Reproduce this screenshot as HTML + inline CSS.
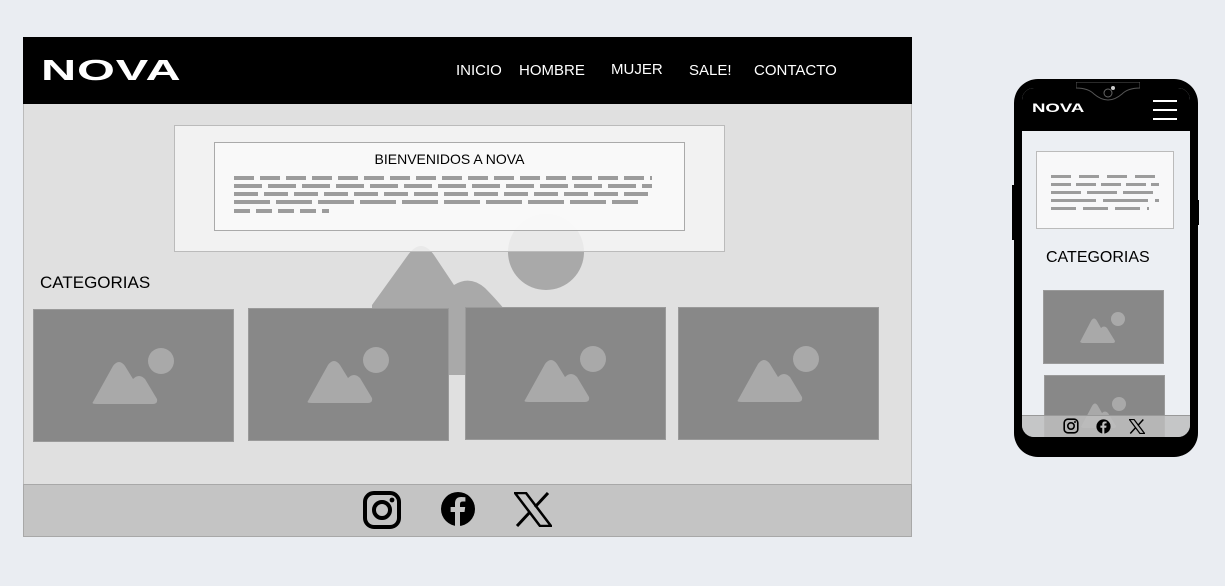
<!DOCTYPE html>
<html><head><meta charset="utf-8"><style>
*{margin:0;padding:0;box-sizing:border-box}
body{width:1225px;height:586px;background:#eaedf2;position:relative;overflow:hidden;font-family:"Liberation Sans",Arial,sans-serif}
.abs{position:absolute}
.nav{color:#fff;font-size:15px;top:62px}
.card{position:absolute;background:#888;border:1px solid #9a9a9a}
</style></head><body>
<!-- desktop -->
<div class="abs" style="left:23px;top:37px;width:889px;height:500px;background:#e0e0e0;border:1px solid #bbb"></div>
<div class="abs" style="left:23px;top:37px;width:889px;height:67px;background:#000"></div>
<div class="abs" style="left:41px;top:54px;color:#fff;font-size:29px;font-weight:bold;letter-spacing:0.5px;transform:scaleX(1.68);transform-origin:left;line-height:34px">NOVA</div>
<div class="abs nav" style="left:456px">INICIO</div>
<div class="abs nav" style="left:519px">HOMBRE</div>
<div class="abs nav" style="left:611px;top:61px">MUJER</div>
<div class="abs nav" style="left:689px">SALE!</div>
<div class="abs nav" style="left:754px">CONTACTO</div>
<svg class="abs" style="left:0;top:0" width="912" height="480">
<path d="M372 305 L408 255 Q421 237 434 255 L454 285 Q470 275 485 288 Q495 298 505 310 L505 375 L372 375 Z" fill="#a9a9a9"/>
<circle cx="546" cy="252" r="38" fill="#a9a9a9"/>
</svg>
<div class="abs" style="left:174px;top:125px;width:551px;height:127px;background:rgba(245,245,245,0.85);border:1px solid #bbb"></div>
<div class="abs" style="left:214px;top:142px;width:471px;height:89px;background:rgba(250,250,250,0.9);border:1px solid #aaa"></div>
<div class="abs" style="left:214px;top:151px;width:471px;text-align:center;font-size:14px">BIENVENIDOS A NOVA</div>
<div class="abs" style="left:234px;top:176px;width:418px;height:4px;background:repeating-linear-gradient(90deg,#9c9c9c 0 20px,transparent 20px 26px)"></div>
<div class="abs" style="left:234px;top:184px;width:418px;height:4px;background:repeating-linear-gradient(90deg,#9c9c9c 0 28px,transparent 28px 34px)"></div>
<div class="abs" style="left:234px;top:192px;width:418px;height:4px;background:repeating-linear-gradient(90deg,#9c9c9c 0 24px,transparent 24px 30px)"></div>
<div class="abs" style="left:234px;top:200px;width:404px;height:4px;background:repeating-linear-gradient(90deg,#9c9c9c 0 36px,transparent 36px 42px)"></div>
<div class="abs" style="left:234px;top:209px;width:95px;height:4px;background:repeating-linear-gradient(90deg,#9c9c9c 0 16px,transparent 16px 22px)"></div>
<div class="abs" style="left:40px;top:273px;font-size:17px">CATEGORIAS</div>
<div class="card" style="left:33px;top:309px;width:201px;height:133px"></div>
<div class="card" style="left:248px;top:308px;width:201px;height:133px"></div>
<div class="card" style="left:465px;top:307px;width:201px;height:133px"></div>
<div class="card" style="left:678px;top:307px;width:201px;height:133px"></div>
<svg class="abs" style="left:0;top:0" width="912" height="480" fill="#a9a9a9">
<g transform="translate(33,309)"><path d="M60 93 L80 57 Q86 49 92 57 L100 70 Q106 64 112 70 L124 90 Q125 95 120 95 L64 95 Q58 95 60 93Z"/><circle cx="128" cy="52" r="13"/></g>
<g transform="translate(248,308)"><path d="M60 93 L80 57 Q86 49 92 57 L100 70 Q106 64 112 70 L124 90 Q125 95 120 95 L64 95 Q58 95 60 93Z"/><circle cx="128" cy="52" r="13"/></g>
<g transform="translate(465,307)"><path d="M60 93 L80 57 Q86 49 92 57 L100 70 Q106 64 112 70 L124 90 Q125 95 120 95 L64 95 Q58 95 60 93Z"/><circle cx="128" cy="52" r="13"/></g>
<g transform="translate(678,307)"><path d="M60 93 L80 57 Q86 49 92 57 L100 70 Q106 64 112 70 L124 90 Q125 95 120 95 L64 95 Q58 95 60 93Z"/><circle cx="128" cy="52" r="13"/></g>
</svg>
<div class="abs" style="left:23px;top:484px;width:889px;height:53px;background:#c4c4c4;border:1px solid #a8a8a8"></div>
<svg class="abs" style="left:362px;top:490px" width="40" height="40" viewBox="0 0 40 40"><rect x="3" y="3" width="34" height="34" rx="9" fill="none" stroke="#000" stroke-width="4"/><circle cx="20" cy="20" r="8" fill="none" stroke="#000" stroke-width="4"/><circle cx="30" cy="10" r="2.4"/></svg>
<svg class="abs" style="left:440px;top:491px" width="36" height="36" viewBox="0 0 36 36"><circle cx="18" cy="18" r="17"/><path d="M20 36 V21 H24.5 L25.2 16 H20 V13 Q20 10.5 22.8 10.5 H25.4 V6.3 Q23.5 6 21.3 6 Q15 6 15 12.4 V16 H10.6 V21 H15 V36Z" fill="#c4c4c4"/></svg>
<svg class="abs" style="left:514px;top:492px" width="38" height="35" viewBox="0 0 38 35"><path d="M1 1 H12 L37 34 H26 Z" fill="none" stroke="#000" stroke-width="2.5"/><path d="M34 1 L21 15 M3 34 L16 20" stroke="#000" stroke-width="3"/></svg>
<!-- phone -->
<div class="abs" style="left:1014px;top:79px;width:184px;height:378px;background:#000;border-radius:24px"></div>
<div class="abs" style="left:1012px;top:185px;width:4px;height:55px;background:#000"></div>
<div class="abs" style="left:1195px;top:200px;width:4px;height:25px;background:#000"></div>
<div class="abs" style="left:1022px;top:88px;width:168px;height:349px;background:#eceff3;border-radius:12px;overflow:hidden">
 <div class="abs" style="left:0;top:0;width:168px;height:43px;background:#000"></div>
 <div class="abs" style="left:10px;top:13px;color:#fff;font-size:12px;font-weight:bold;transform:scaleX(1.55);transform-origin:left">NOVA</div>
 <div class="abs" style="left:131px;top:12px;width:24px;height:2px;background:#fff"></div>
 <div class="abs" style="left:131px;top:21px;width:24px;height:2px;background:#fff"></div>
 <div class="abs" style="left:131px;top:30px;width:24px;height:2px;background:#fff"></div>
 <div class="abs" style="left:14px;top:63px;width:138px;height:78px;background:#f8f8f9;border:1px solid #bbb"></div>
 <div class="abs" style="left:29px;top:87px;width:108px;height:3px;background:repeating-linear-gradient(90deg,#9c9c9c 0 20px,transparent 20px 28px)"></div>
 <div class="abs" style="left:29px;top:95px;width:108px;height:3px;background:repeating-linear-gradient(90deg,#9c9c9c 0 20px,transparent 20px 25px)"></div>
 <div class="abs" style="left:29px;top:103px;width:108px;height:3px;background:repeating-linear-gradient(90deg,#9c9c9c 0 30px,transparent 30px 36px)"></div>
 <div class="abs" style="left:29px;top:111px;width:108px;height:3px;background:repeating-linear-gradient(90deg,#9c9c9c 0 45px,transparent 45px 52px)"></div>
 <div class="abs" style="left:29px;top:119px;width:98px;height:3px;background:repeating-linear-gradient(90deg,#9c9c9c 0 25px,transparent 25px 32px)"></div>
 <div class="abs" style="left:24px;top:161px;font-size:16px">CATEGORIAS</div>
 <div class="card" style="left:21px;top:202px;width:121px;height:74px"></div>
 <div class="card" style="left:22px;top:287px;width:121px;height:74px"></div>
 <svg class="abs" style="left:0;top:0" width="168" height="349" fill="#a9a9a9">
  <path d="M58 254 L69 233 Q72 228 75 233 L79 240 Q82 237 85 240 L93 253 Q93 255 91 255 L60 255Z"/><circle cx="96" cy="231" r="7"/>
  <path d="M59 339 L70 318 Q73 313 76 318 L80 325 Q83 322 86 325 L94 338 Q94 340 92 340 L61 340Z"/><circle cx="97" cy="316" r="7"/>
 </svg>
 <div class="abs" style="left:0;top:327px;width:168px;height:22px;background:rgba(190,190,190,0.85);border-top:1px solid #999"></div>
 <svg class="abs" style="left:41px;top:330px" width="16" height="16" viewBox="0 0 40 40"><rect x="3" y="3" width="34" height="34" rx="9" fill="none" stroke="#000" stroke-width="4"/><circle cx="20" cy="20" r="8" fill="none" stroke="#000" stroke-width="4"/><circle cx="30" cy="10" r="2.4"/></svg>
 <svg class="abs" style="left:74px;top:331px" width="15" height="15" viewBox="0 0 36 36"><circle cx="18" cy="18" r="17"/><path d="M20 36 V21 H24.5 L25.2 16 H20 V13 Q20 10.5 22.8 10.5 H25.4 V6.3 Q23.5 6 21.3 6 Q15 6 15 12.4 V16 H10.6 V21 H15 V36Z" fill="#bebebe"/></svg>
 <svg class="abs" style="left:107px;top:331px" width="16" height="15" viewBox="0 0 38 35"><path d="M1 1 H12 L37 34 H26 Z" fill="none" stroke="#000" stroke-width="3"/><path d="M34 1 L21 15 M3 34 L16 20" stroke="#000" stroke-width="3.5"/></svg>
</div>
<!-- notch -->
<svg class="abs" style="left:1076px;top:82px" width="64" height="22"><path d="M0 6 Q12 6 18 12 Q32 24 46 12 Q52 6 64 6 L64 0 L0 0Z" fill="#000" stroke="#555" stroke-width="1"/><circle cx="32" cy="11" r="4" fill="none" stroke="#666" stroke-width="1"/><circle cx="37" cy="6" r="2" fill="#ccc"/></svg>
</body></html>
